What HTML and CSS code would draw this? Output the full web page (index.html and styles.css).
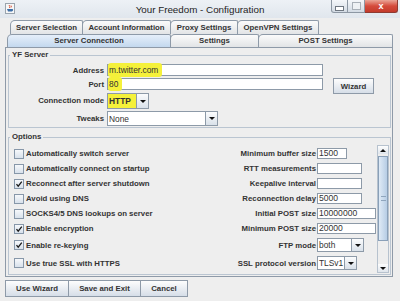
FILE: index.html
```html
<!DOCTYPE html>
<html lang="en">

<head>
    <meta charset="UTF-8">
    <title>Your Freedom - Configuration</title>
    <link rel="stylesheet" href="styles.css">
</head>

<body>
    <div class="titlebar">
        <span class="app-icon">
            <svg width="10" height="11" viewBox="0 0 10 11">
                <rect x="0.5" y="0.5" width="9" height="10" fill="#f7f7f7" stroke="#9aa4ae" />
                <path d="M4 2 Q5.5 3.5 4.5 5 M6 2.5 Q7 3.5 6 4.5" stroke="#d2452b" stroke-width="0.9" fill="none" />
                <path d="M2 6 H7.5 Q8.5 6 8 7.5 L7 8.5 H3 Z" fill="#3c6ea8" />
            </svg>
        </span>
        <span class="title">Your Freedom - Configuration</span>
        <div class="controls">
            <span class="ctl ctl-min"></span>
            <span class="ctl ctl-max"></span>
            <span class="ctl ctl-close">x</span>
        </div>
    </div>

    <div class="frame">
        <div class="tabs tabs-top">
            <div class="tab w-73">Server Selection</div>
            <div class="tab w-89">Account Information</div>
            <div class="tab w-68">Proxy Settings</div>
            <div class="tab w-82">OpenVPN Settings</div>
        </div>
        <div class="tabs tabs-bottom">
            <div class="tab active w-164">Server Connection</div>
            <div class="tab w-89">Settings</div>
            <div class="tab w-135">POST Settings</div>
        </div>

        <div class="tab-content">
            <fieldset class="group">
                <legend>YF Server</legend>
                <div class="server-grid">
                    <label class="lbl">Address</label>
                    <div class="field"><span class="hl">m.twitter.com</span></div>
                    <span></span>

                    <label class="lbl">Port</label>
                    <div class="field"><span class="hl">80</span></div>
                    <button class="btn wizard">Wizard</button>

                    <label class="lbl">Connection mode</label>
                    <div class="combo combo-mode">
                        <span class="combo-val marked">HTTP</span>
                        <span class="combo-btn"></span>
                    </div>

                    <label class="lbl">Tweaks</label>
                    <div class="combo combo-tweaks">
                        <span class="combo-val">None</span>
                        <span class="combo-btn"></span>
                    </div>
                </div>
            </fieldset>

            <fieldset class="group options">
                <legend>Options</legend>
                <div class="options-body">
                    <div class="opt-view">
                        <div class="opt-grid">
                            <div class="opt"><span class="box"></span>Automatically switch server</div>
                            <span class="lbl">Minimum buffer size</span>
                            <div class="field small w-30">1500</div>

                            <div class="opt"><span class="box"></span>Automatically connect on startup</div>
                            <span class="lbl">RTT measurements</span>
                            <div class="field small w-45"></div>

                            <div class="opt"><span class="box checked"><svg width="8" height="8" viewBox="0 0 8 8"><path d="M1.5 4.2 L3.2 6.2 L6.8 1.6" /></svg></span>Reconnect after server shutdown</div>
                            <span class="lbl">Keepalive interval</span>
                            <div class="field small w-45"></div>

                            <div class="opt"><span class="box"></span>Avoid using DNS</div>
                            <span class="lbl">Reconnection delay</span>
                            <div class="field small w-45">5000</div>

                            <div class="opt"><span class="box"></span>SOCKS4/5 DNS lookups on server</div>
                            <span class="lbl">Initial POST size</span>
                            <div class="field small w-59">10000000</div>

                            <div class="opt"><span class="box checked"><svg width="8" height="8" viewBox="0 0 8 8"><path d="M1.5 4.2 L3.2 6.2 L6.8 1.6" /></svg></span>Enable encryption</div>
                            <span class="lbl">Minimum POST size</span>
                            <div class="field small w-59">20000</div>

                            <div class="opt"><span class="box checked"><svg width="8" height="8" viewBox="0 0 8 8"><path d="M1.5 4.2 L3.2 6.2 L6.8 1.6" /></svg></span>Enable re-keying</div>
                            <span class="lbl">FTP mode</span>
                            <div class="combo combo-ftp">
                                <span class="combo-val">both</span>
                                <span class="combo-btn"></span>
                            </div>

                            <div class="opt"><span class="box"></span>Use true SSL with HTTPS</div>
                            <span class="lbl">SSL protocol version</span>
                            <div class="combo combo-ssl">
                                <span class="combo-val">TLSv1</span>
                                <span class="combo-btn"></span>
                            </div>

                            <div class="opt"><span class="box"></span></div>
                            <span></span>
                            <div class="field small w-37"></div>
                        </div>
                    </div>
                    <div class="scrollbar">
                        <span class="sb-arrow up"></span>
                        <div class="sb-track"><span class="sb-thumb"></span></div>
                        <span class="sb-arrow down"></span>
                    </div>
                </div>
            </fieldset>
        </div>

        <div class="actions">
            <button class="btn w-64">Use Wizard</button>
            <button class="btn w-73">Save and Exit</button>
            <button class="btn w-48">Cancel</button>
        </div>
    </div>
</body>

</html>
```

FILE: styles.css
```css
* {
    margin: 0;
    padding: 0;
    box-sizing: border-box;
}

body {
    width: 400px;
    height: 301px;
    overflow: hidden;
    background: #eeeeee;
    font-family: "Liberation Sans", Arial, sans-serif;
    font-size: 7.8px;
    color: #333;
}

/* window title bar */

.titlebar {
    height: 18px;
    display: grid;
    grid-template-columns: 1fr auto 1fr;
    align-items: start;
    background: linear-gradient(#edf1f6, #e0e6ed);
}

.app-icon {
    display: block;
    margin: 3px 0 0 5px;
    width: 10px;
    height: 11px;
}

.title {
    font-size: 9.8px;
    line-height: 12px;
    margin-top: 4px;
    color: #1e1e1e;
}

.controls {
    justify-self: end;
    display: flex;
    margin-right: 2px;
}

.ctl {
    display: flex;
    align-items: center;
    justify-content: center;
    height: 13px;
    border: 1px solid #8d97a3;
    border-top: none;
    background: linear-gradient(#f5f7fa, #d3dbe4);
}

.ctl-min {
    width: 17px;
    border-radius: 0 0 0 3px;
}

.ctl-min::after {
    content: "";
    width: 7px;
    height: 3px;
    margin-top: 4px;
    border: 1px solid #6f7781;
    background: #fff;
}

.ctl-max {
    width: 17px;
    border-left: none;
}

.ctl-max::after {
    content: "";
    width: 7px;
    height: 6px;
    border: 1px solid #a9b0b8;
    background: #eef1f4;
}

.ctl-close {
    width: 33px;
    border-color: #8e3b32;
    border-left: none;
    border-radius: 0 0 3px 0;
    background: linear-gradient(#eaa597, #d54b3c 50%, #c33b2c);
    color: #fff;
    font-weight: bold;
    font-size: 9px;
}

/* window body */

.frame {
    padding: 0 7px 0 5px;
}

.tabs {
    display: flex;
}

.tabs-top {
    height: 14px;
    margin-top: 2px;
    padding-left: 5px;
}

.tabs-bottom {
    height: 13px;
    padding-left: 2px;
}

.tab {
    border: 1px solid #8e9aa8;
    border-bottom: none;
    margin-right: -1px;
    border-radius: 5px 2px 0 0;
    background: linear-gradient(#fbfbfb, #e2e4e6);
    font-weight: bold;
    text-align: center;
    line-height: 12px;
    white-space: nowrap;
}

.tabs-top .tab {
    line-height: 13px;
}

.tab.active {
    background: linear-gradient(#e6effa, #c3d8ee);
}

.w-30 { width: 30px; }
.w-37 { width: 37px; }
.w-45 { width: 45px; }
.w-48 { width: 48px; }
.w-59 { width: 59px; }
.w-64 { width: 64px; }
.w-68 { width: 68px; }
.w-73 { width: 73px; }
.w-82 { width: 82px; }
.w-89 { width: 89px; }
.w-135 { width: 135px; }
.w-164 { width: 164px; }

.tab-content {
    border: 1px solid #8e9aa8;
    padding: 2px 0 1px 0;
}

/* titled group boxes */

.group {
    border: 1px solid #bac5d1;
    margin: 0 1px 0 2px;
    min-width: 0;
}

.group legend {
    margin-left: 1px;
    padding: 0 2px;
    font-weight: bold;
    line-height: 10px;
}

.server-grid {
    display: grid;
    grid-template-columns: 95px 216px 48px;
    grid-template-rows: 12px 12px 17px 15px;
    column-gap: 3px;
    row-gap: 2px;
    padding: 4px 0 1px;
}

.lbl {
    justify-self: end;
    align-self: center;
    font-weight: bold;
    white-space: nowrap;
}

.field {
    height: 12px;
    border: 1px solid #8d9aa8;
    background: #fff;
    font-size: 8.4px;
    line-height: 10px;
    padding-left: 1px;
    white-space: nowrap;
}

.field.small {
    height: 11px;
    line-height: 9px;
    font-size: 8.6px;
}

.hl {
    background: #f5f13a;
    padding: 2px 4px 2px 1px;
    margin-left: -1px;
    border-radius: 3px;
}

.btn {
    font-family: inherit;
    font-size: 7.8px;
    font-weight: bold;
    color: #333;
    border: 1px solid #8e9aa8;
    background: linear-gradient(#fdfdfd, #d6dee8);
}

.wizard {
    grid-column: 3;
    grid-row: 2 / span 2;
    align-self: start;
    height: 16px;
    margin-left: 7px;
}

.combo {
    display: flex;
    height: 14px;
    border: 1px solid #8d9aa8;
    background: #fff;
    font-size: 8.4px;
    align-self: center;
}

.combo-mode {
    width: 42px;
    height: 16px;
    align-self: end;
}

.combo-tweaks {
    width: 111px;
    height: 15px;
}

.combo-ftp {
    width: 47px;
}

.combo-ssl {
    width: 40px;
}

.combo-val {
    flex: 1;
    padding-left: 1px;
    display: flex;
    align-items: center;
    white-space: nowrap;
}

.combo-val.marked {
    background: #f5f13a;
    font-weight: bold;
}

.combo-btn {
    width: 12px;
    border-left: 1px solid #8d9aa8;
    background: linear-gradient(#fbfcfd, #d9e1ea);
    display: flex;
    align-items: center;
    justify-content: center;
}

.combo-btn::after,
.sb-arrow::after {
    content: "";
    border-left: 3px solid transparent;
    border-right: 3px solid transparent;
    border-top: 3px solid #111;
}

/* options list */

.options {
    margin-top: 4px;
}

.options-body {
    display: flex;
    padding-top: 3px;
}

.opt-view {
    flex: 1;
    height: 129px;
    overflow: hidden;
}

.opt-grid {
    display: grid;
    grid-template-columns: 1fr auto 60px;
    column-gap: 1px;
    row-gap: 4px;
    padding-top: 3px;
    align-items: center;
}

.opt-grid .field,
.opt-grid .combo {
    justify-self: start;
}

.opt {
    display: flex;
    align-items: center;
    gap: 2px;
    padding-left: 5px;
    font-weight: bold;
    white-space: nowrap;
}

.box {
    width: 10px;
    height: 10px;
    border: 1px solid #8797a9;
    background: linear-gradient(#f6f8fb, #d8e1eb);
    display: flex;
    align-items: center;
    justify-content: center;
}

.box path {
    fill: none;
    stroke: #1a1a1a;
    stroke-width: 1.3;
}

.scrollbar {
    width: 12px;
    height: 128px;
    margin-right: 1px;
    display: flex;
    flex-direction: column;
    border: 1px solid #b7c2ce;
    background: #eeeeee;
}

.sb-arrow {
    height: 8px;
    display: flex;
    align-items: center;
    justify-content: center;
    background: linear-gradient(#fdfdfd, #dfe5ec);
}

.sb-arrow.up::after {
    border-top: none;
    border-bottom: 3px solid #111;
}

.sb-track {
    flex: 1;
    padding-top: 2px;
}

.sb-thumb {
    display: flex;
    align-items: center;
    justify-content: center;
    height: 85px;
    border: 1px solid #8aa0b8;
    background: linear-gradient(90deg, #dfeaf6, #b7cde5);
}

.sb-thumb::after {
    content: "";
    width: 5px;
    height: 3px;
    border-top: 1px solid #8fa5bd;
    border-bottom: 1px solid #8fa5bd;
}

/* bottom buttons */

.actions {
    display: flex;
    margin-top: 3px;
}

.actions .btn {
    height: 17px;
    margin-right: -1px;
}
```
